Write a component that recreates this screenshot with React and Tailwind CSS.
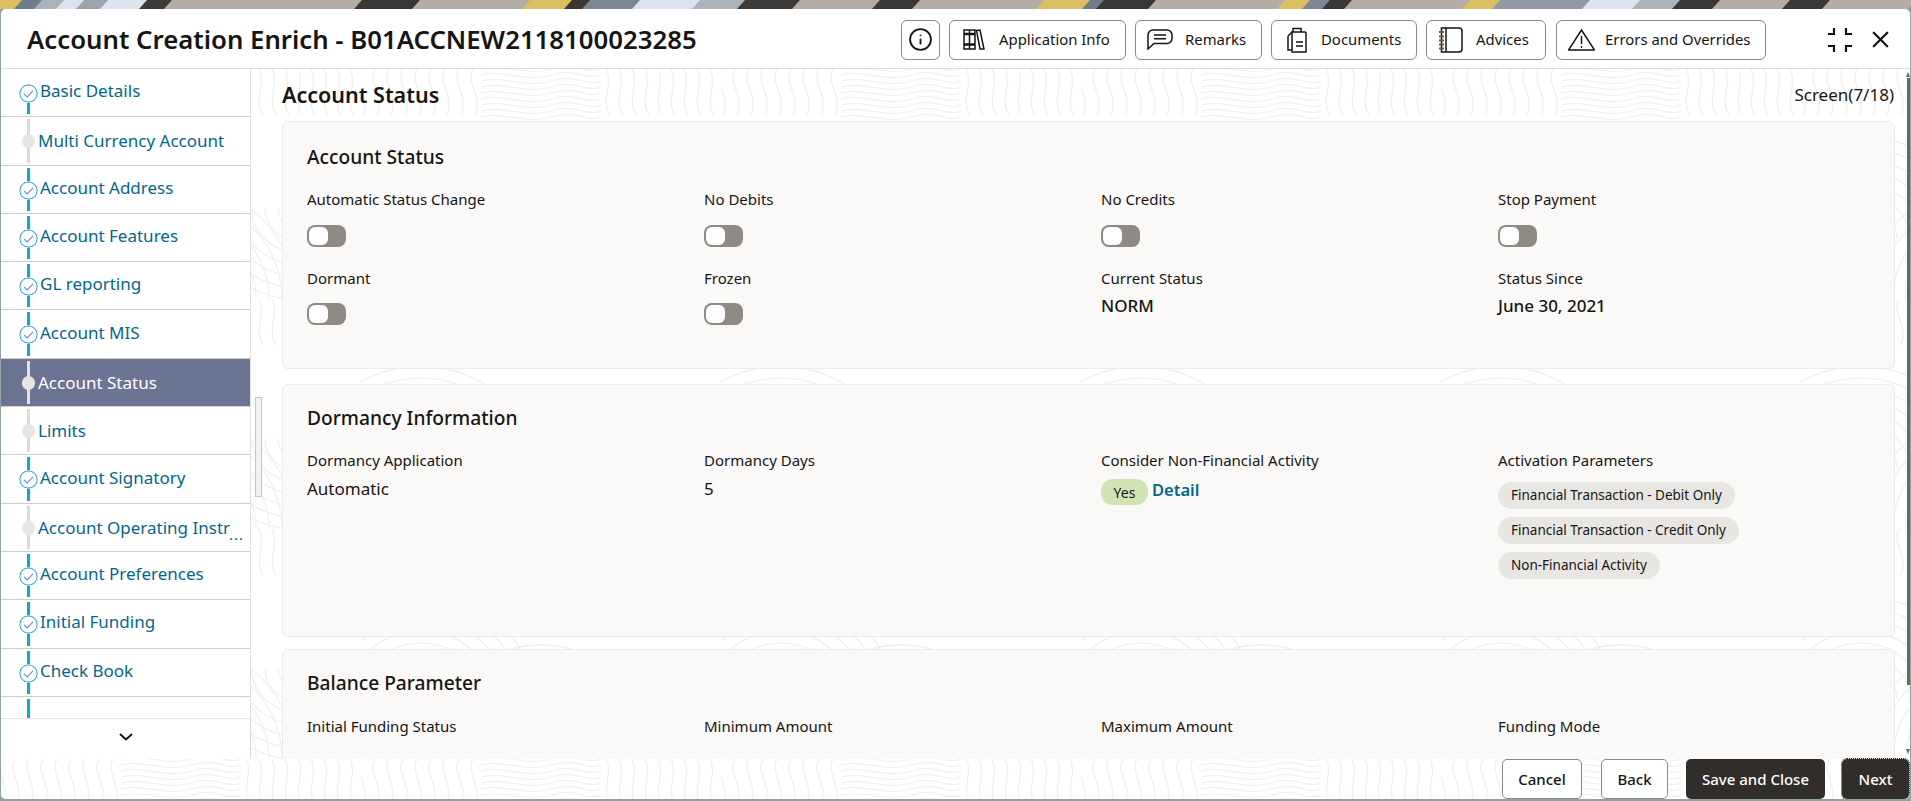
import { Info, X } from 'lucide-react';

const navItems = [
  { name: 'Basic Details', state: 'done', first: true },
  { name: 'Multi Currency Account', state: 'todo' },
  { name: 'Account Address', state: 'done' },
  { name: 'Account Features', state: 'done' },
  { name: 'GL reporting', state: 'done' },
  { name: 'Account MIS', state: 'done' },
  { name: 'Account Status', state: 'active' },
  { name: 'Limits', state: 'todo' },
  { name: 'Account Signatory', state: 'done' },
  { name: 'Account Operating Instr', state: 'todo', more: true },
  { name: 'Account Preferences', state: 'done' },
  { name: 'Initial Funding', state: 'done' },
  { name: 'Check Book', state: 'done' },
  { name: '', state: 'done' },
];

function CheckCircle() {
  return (
    <svg width="19" height="19" viewBox="0 0 19 19" fill="none" className="bg-white rounded-full">
      <circle cx="9.5" cy="9.5" r="8.7" stroke="#3ea9e0" strokeWidth="1.2" />
      <path d="M5 9.800l3.200 3.200L14 6.800" stroke="#6d93b5" strokeWidth="1.1" />
    </svg>
  );
}

function NavRow({ item }) {
  const isDone = item.state === 'done';
  const isActive = item.state === 'active';
  return (
    <div className={`relative h-[48.3px] shrink-0 border-b border-[#d0cdc9] flex items-center ${isActive ? 'bg-[#6c7494]' : 'bg-white'}`}>
      <div className={`absolute left-[26px] bottom-[2px] w-[3px] ${item.first ? 'top-[24px]' : 'top-[2px]'} ${isDone ? 'bg-[#0ea5e0]' : isActive ? 'bg-[#e4e2df]' : 'bg-[#dcdad7]'}`} />
      {isDone && item.name && <div className="absolute left-[18px] top-[15px]"><CheckCircle /></div>}
      {!isDone && <div className="absolute left-[21px] top-[17px] w-[13px] h-[14px] rounded-full bg-[#e8e6e3]" />}
      <span className={`text-[17px] leading-none ${isDone ? 'ml-[39px] -mt-[4px]' : 'ml-[37px]'} ${isActive ? 'text-white' : 'text-[#00688c]'}`}>{item.name}</span>
      {item.more && <span className="absolute right-[6px] bottom-[9px] text-[#00688c] text-[15px] leading-none tracking-[1px]">...</span>}
    </div>
  );
}

function Toggle() {
  return (
    <div className="w-[39px] h-[22px] rounded-[8px] bg-[#8f8a83] p-[2px]">
      <div className="w-[19px] h-[18px] rounded-[6px] bg-white" />
    </div>
  );
}

function Field({ label, children, className = '' }) {
  return (
    <div className={className}>
      <div className="text-[15px] leading-[20px] text-[#161513] whitespace-nowrap">{label}</div>
      {children}
    </div>
  );
}

function Chip({ children }) {
  return (
    <div className="w-fit h-[27px] rounded-full bg-[#e8e6e3] px-[13px] flex items-center text-[13.5px] text-[#161513] whitespace-nowrap">{children}</div>
  );
}

function Card({ title, className, children }) {
  return (
    <section className={`relative bg-[#fbf9f8] border border-[#eceae7] rounded-[6px] pl-[24px] ${className}`}>
      <h3 className="text-[19.2px] leading-[26px] font-medium text-[#161513]">{title}</h3>
      {children}
    </section>
  );
}

function HeaderButton({ icon, children, className }) {
  return (
    <button className={`h-[40px] rounded-[6px] border border-[#8c8883] bg-white flex items-center text-[14.9px] text-[#161513] whitespace-nowrap ${className}`}>
      {icon}
      {children}
    </button>
  );
}

function FooterButton({ dark, className, children }) {
  return (
    <button className={`relative h-[40px] rounded-[5px] text-[15px] font-medium flex items-center justify-center ${dark ? 'bg-[#312d2a] text-white' : 'bg-white border border-[#8c8883] text-[#161513]'} ${className}`}>
      {children}
    </button>
  );
}

const ink = { fill: 'none', stroke: '#161513', strokeWidth: 1.5 };

function BooksIcon() {
  return (
    <svg width="22" height="21" viewBox="0 0 22 21" {...ink}>
      <path d="M1 1h5.500v19H1zM6.500 1H12v19H6.500z" />
      <path d="M13.500 1.500l3.500-.5L21 20h-4z" />
      <path d="M1 5h5.500M1 15.500h5.500M6.500 5H12M6.500 15.500H12" strokeWidth="2.600" />
    </svg>
  );
}

function RemarkIcon() {
  return (
    <svg width="26" height="21" viewBox="0 0 26 21" {...ink}>
      <path d="M6 1h14a5 5 0 0 1 5 5v3.500a5 5 0 0 1-5 5H7L1 20V6a5 5 0 0 1 5-5z" />
      <path d="M7 6h12M7 9.800h12" />
    </svg>
  );
}

function DocIcon() {
  return (
    <svg width="20" height="26" viewBox="0 0 20 26" {...ink}>
      <path d="M5 5h13a1 1 0 0 1 1 1v19H5z" />
      <path d="M1 9l4-4M1 9v14h4" />
      <path d="M6 5V1.500h8V5" />
      <path d="M9 15h7M9 19h7" />
    </svg>
  );
}

function NotebookIcon() {
  return (
    <svg width="25" height="26" viewBox="0 0 25 26" {...ink}>
      <path d="M3.500 1H21a3 3 0 0 1 3 3v18a3 3 0 0 1-3 3H3.500z" />
      <path d="M8 1v24" />
      <path d="M1 5h5M1 9.500h5M1 13.500h5M1 17.500h5M1 21.500h5" strokeWidth="1.800" stroke="#6b5a4a" />
    </svg>
  );
}

function WarnIcon() {
  return (
    <svg width="27" height="22" viewBox="0 0 27 22" {...ink}>
      <path d="M13.500 1L26.500 21H.5z" strokeLinejoin="round" />
      <path d="M13.500 7v8M13.500 17v2" />
    </svg>
  );
}

function CompressIcon() {
  return (
    <svg width="24" height="24" viewBox="0 0 24 24" fill="none" stroke="#161513" strokeWidth="2.200">
      <path d="M6 0v6H0M18 0v6h6M6 24v-6H0M18 24v-6h6" />
    </svg>
  );
}

const stripBands = [
  [0, 22, '#dcbf63'], [22, 42, '#6f7d8b'], [42, 64, '#a9b3bb'], [64, 84, '#dbe3f0'], [84, 108, '#9aa5ae'],
  [108, 147, '#dde4f0'], [147, 172, '#3d3a38'], [172, 362, '#b3ada3'], [362, 420, '#3a3836'], [420, 530, '#b3ada3'],
  [530, 572, '#dcbf63'], [572, 590, '#3a3836'], [590, 640, '#7a8793'], [640, 700, '#dbe3f0'], [700, 745, '#a9b3bb'],
  [745, 800, '#3d3a38'], [800, 880, '#b3ada3'], [880, 920, '#3a3836'], [920, 1044, '#b3ada3'], [1044, 1090, '#dcbf63'],
  [1090, 1104, '#6f7d8b'], [1104, 1156, '#3a3836'], [1156, 1285, '#b3ada3'], [1285, 1310, '#dcbf63'], [1310, 1330, '#7a8793'],
  [1330, 1352, '#3a3836'], [1352, 1470, '#b3ada3'], [1470, 1500, '#dcbf63'], [1500, 1590, '#8f9aa4'], [1590, 1640, '#dbe3f0'],
  [1640, 1680, '#a9b3bb'], [1680, 1720, '#3a3836'], [1720, 1790, '#b3ada3'], [1790, 1830, '#3a3836'], [1830, 1911, '#b3ada3'],
];

function TopStrip() {
  return (
    <div className="h-[9px] overflow-hidden">
      <svg width="1911" height="9" className="block">
        {stripBands.map(([from, to, color]) => (
          <path key={from} d={`M${from} 0H${to + 5}L${to - 3} 9H${from - 8}z`} fill={color} />
        ))}
      </svg>
    </div>
  );
}

// faint fingerprint waves behind the main area
function WaveBackground({ id }) {
  const tile = [];
  for (let i = 0; i < 9; i++) {
    tile.push(<path key={`a${i}`} d={`M${i * 14} 0c-8 14 10 26 2 46`} />);
    tile.push(<path key={`b${i}`} d={`M120 ${i * 6}c24 -6 44 8 70 0 s34 6 50 0`} />);
    tile.push(<path key={`c${i}`} d={`M${245 + i * 13} 0c8 16 -6 30 4 46`} />);
    const r = 10 + i * 13;
    tile.push(<path key={`d${i}`} d={`M${60 - r} 170a${r} ${r * 0.9} 0 0 1 ${r * 2} 0`} />);
    tile.push(<path key={`e${i}`} d={`M${300 - r} 140a${r} ${r * 0.9} 0 0 0 ${r * 2} 0`} />);
    tile.push(<path key={`f${i}`} d={`M${180 - r} 230a${r} ${r} 0 0 1 ${r * 2} 0`} />);
  }
  return (
    <svg className="absolute inset-0 w-full h-full">
      <defs>
        <pattern id={id} width="360" height="230" patternUnits="userSpaceOnUse">
          <g fill="none" stroke="#f2f0ee" strokeWidth="1.300">{tile}</g>
        </pattern>
      </defs>
      <rect width="100%" height="100%" fill={`url(#${id})`} />
    </svg>
  );
}

export default function App() {
  return (
    <div className="w-[1911px] h-[801px] overflow-hidden bg-[#8fa5a3] text-[#161513]" style={{ fontFamily: '"Noto Sans", sans-serif' }}>
      <TopStrip />
      <div className="relative h-[790px] ml-[1px] mr-[1px] bg-white rounded-[5px] overflow-hidden flex flex-col">
        <header className="h-[60px] shrink-0 border-b border-[#dedcd9] flex items-center pl-[26px] pt-[2px]">
          <h1 className="w-[874px] shrink-0 text-[25.75px] font-semibold whitespace-nowrap">Account Creation Enrich - B01ACCNEW2118100023285</h1>
          <div className="flex gap-[9px]">
            <HeaderButton className="w-[39px] justify-center" icon={<Info size={25} strokeWidth={1.8} />} />
            <HeaderButton className="w-[177px] pl-[13px] gap-[14px]" icon={<BooksIcon />}>Application Info</HeaderButton>
            <HeaderButton className="w-[127px] pl-[11px] gap-[12px]" icon={<RemarkIcon />}>Remarks</HeaderButton>
            <HeaderButton className="w-[146px] pl-[15px] gap-[14px]" icon={<DocIcon />}>Documents</HeaderButton>
            <HeaderButton className="w-[120px] pl-[11px] gap-[13px]" icon={<NotebookIcon />}>Advices</HeaderButton>
            <HeaderButton className="w-[210px] ml-[1px] pl-[11px] gap-[10px]" icon={<WarnIcon />}>Errors and Overrides</HeaderButton>
          </div>
          <div className="ml-[62px] flex items-center gap-[15px]">
            <CompressIcon />
            <X size={27} strokeWidth={2} />
          </div>
        </header>

        <div className="relative flex-1 min-h-0 flex flex-col bg-white">
          <WaveBackground id="page-waves" />
          <div className="relative flex-1 min-h-0 flex">
            <aside className="relative w-[250px] shrink-0 bg-white border-r border-[#e3e1de] flex flex-col">
              <div className="h-[649px] overflow-hidden flex flex-col">
                {navItems.map((item, i) => <NavRow key={i} item={item} />)}
              </div>
              <div className="flex-1 flex items-center justify-center bg-white border-t border-[#e8e6e3] shadow-[0_-2px_3px_rgba(0,0,0,0.05)]">
                <svg width="14" height="8" viewBox="0 0 14 8" fill="none" stroke="#161513" strokeWidth="2" className="-mt-[4px]"><path d="M1 1l6 5.500L13 1" /></svg>
              </div>
            </aside>

            <div className="absolute left-[254px] top-[328px] w-[7px] h-[100px] border border-[#c9c6c2] bg-[#f3f1ef]" />

            <main className="relative flex-1 min-w-0 overflow-hidden pl-[31px] pr-[15px]">
              <div className="flex items-center justify-between h-[52px]">
                <h2 className="text-[21.5px] font-semibold">Account Status</h2>
                <span className="text-[17px] pr-[1px]">Screen(7/18)</span>
              </div>
              <Card title="Account Status" className="h-[248px] pt-[22px]">
                <div className="grid grid-cols-[397px_397px_397px_1fr] mt-[19px]">
                  <Field label="Automatic Status Change"><div className="mt-[16px]"><Toggle /></div></Field>
                  <Field label="No Debits"><div className="mt-[16px]"><Toggle /></div></Field>
                  <Field label="No Credits"><div className="mt-[16px]"><Toggle /></div></Field>
                  <Field label="Stop Payment"><div className="mt-[16px]"><Toggle /></div></Field>
                  <Field label="Dormant" className="mt-[21px]"><div className="mt-[15px]"><Toggle /></div></Field>
                  <Field label="Frozen" className="mt-[21px]"><div className="mt-[15px]"><Toggle /></div></Field>
                  <Field label="Current Status" className="mt-[21px]"><div className="mt-[5px] text-[17px] font-medium">NORM</div></Field>
                  <Field label="Status Since" className="mt-[21px]"><div className="mt-[5px] text-[17px] font-medium">June 30, 2021</div></Field>
                </div>
              </Card>

              <Card title="Dormancy Information" className="h-[253px] mt-[15px] pt-[20px]">
                <div className="grid grid-cols-[397px_397px_397px_1fr] mt-[19px]">
                  <Field label="Dormancy Application"><div className="mt-[6px] text-[17px]">Automatic</div></Field>
                  <Field label="Dormancy Days"><div className="mt-[6px] text-[17px]">5</div></Field>
                  <Field label="Consider Non-Financial Activity">
                    <div className="mt-[9px] flex items-center gap-[4px]">
                      <span className="w-[47px] h-[26px] rounded-[12px] bg-[#d0e4b3] flex items-center justify-center text-[14px]">Yes</span>
                      <span className="text-[16.5px] font-semibold text-[#00688c] -mt-[3px]">Detail</span>
                    </div>
                  </Field>
                  <Field label="Activation Parameters">
                    <div className="mt-[12px] flex flex-col gap-[8px]">
                      <Chip>Financial Transaction - Debit Only</Chip>
                      <Chip>Financial Transaction - Credit Only</Chip>
                      <Chip>Non-Financial Activity</Chip>
                    </div>
                  </Field>
                </div>
              </Card>

              <Card title="Balance Parameter" className="h-[200px] mt-[12px] pt-[20px]">
                <div className="grid grid-cols-[397px_397px_397px_1fr] mt-[20px]">
                  <Field label="Initial Funding Status" />
                  <Field label="Minimum Amount" />
                  <Field label="Maximum Amount" />
                  <Field label="Funding Mode" />
                </div>
              </Card>
            </main>
            <div className="absolute right-0 top-[9px] h-[607px] w-[3px] bg-[#6b6762]" />
            <div className="absolute right-0 top-[3px] border-x-[2px] border-x-transparent border-b-[5px] border-b-[#6b6762]" />
            <div className="absolute right-0 bottom-[5px] border-x-[2px] border-x-transparent border-t-[5px] border-t-[#6b6762]" />
          </div>
          <footer className="relative h-[40px] shrink-0 flex justify-end pr-[1px]">
            <FooterButton className="w-[80px] mr-[19px]">Cancel</FooterButton>
            <FooterButton className="w-[67px] mr-[18px]">Back</FooterButton>
            <FooterButton dark className="w-[139px] mr-[17px]">Save and Close</FooterButton>
            <FooterButton dark className="w-[67px] outline-1 outline-dotted outline-[#161513]">Next</FooterButton>
          </footer>
        </div>
      </div>
    </div>
  );
}
